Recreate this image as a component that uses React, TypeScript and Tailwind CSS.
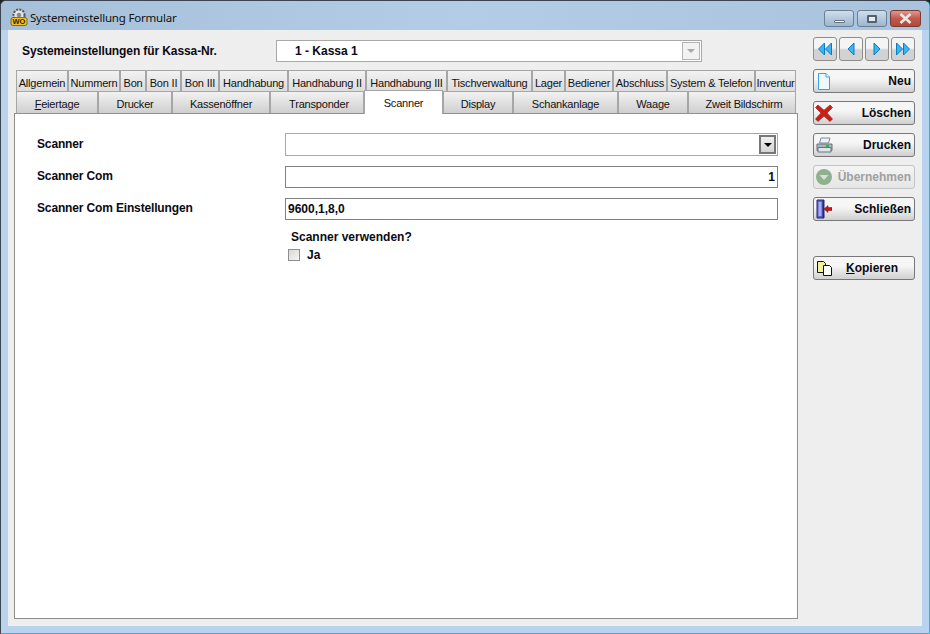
import { ReactNode } from "react"

const topTabs = [
  { label: "Allgemein", w: "w-[52px]" },
  { label: "Nummern", w: "w-[52px]" },
  { label: "Bon", w: "w-[26px]" },
  { label: "Bon II", w: "w-[35px]" },
  { label: "Bon III", w: "w-[38px]" },
  { label: "Handhabung", w: "w-[69px]" },
  { label: "Handhabung II", w: "w-[78px]" },
  { label: "Handhabung III", w: "w-[81px]" },
  { label: "Tischverwaltung", w: "w-[85px]" },
  { label: "Lager", w: "w-[33px]" },
  { label: "Bediener", w: "w-[48px]" },
  { label: "Abschluss", w: "w-[54px]" },
  { label: "System & Telefon", w: "w-[88px]" },
  { label: "Inventur", w: "w-[41px]" },
]

const bottomTabs = [
  { label: "Feiertage", w: "w-[82px]" },
  { label: "Drucker", w: "w-[74px]" },
  { label: "Kassenöffner", w: "w-[98px]" },
  { label: "Transponder", w: "w-[94px] pl-[4px]" },
  { label: "Scanner", w: "w-[79px]", active: true },
  { label: "Display", w: "w-[70px]" },
  { label: "Schankanlage", w: "w-[105px]" },
  { label: "Waage", w: "w-[70px]" },
  { label: "Zweit Bildschirm", w: "w-[108px] pl-[4px]" },
]

function DocIcon() {
  return (
    <svg width="14" height="19" viewBox="0 0 14 19">
      <path d="M1.500 1.500h7.500l3.500 3.500v12.500h-11z" fill="#eef8ff" stroke="#35a6e0" />
      <path d="M9 1.500v3.500h3.500" fill="#fff" stroke="#35a6e0" />
    </svg>
  )
}

function CrossIcon() {
  return (
    <svg width="18" height="18" viewBox="0 0 18 18">
      <path d="M3 1l6 5.200 6-5.200 2.500 2.500-5.500 5.500 5.500 6-2.500 2.500-6-5.500-6 5.500-2.500-2.500 5.500-6-5.500-5.500z" fill="#cc1f18" stroke="#8e1510" strokeWidth="0.6" />
    </svg>
  )
}

function PrinterIcon() {
  return (
    <svg width="17" height="16" viewBox="0 0 17 16">
      <path d="M5 1h9l-1.500 5h-9z" fill="#eef2f6" stroke="#7d8a96" />
      <path d="M1 7h15v6.500h-15z" fill="#a9b6c2" stroke="#66737f" />
      <path d="M2 10.500h13v4.500h-13z" fill="#dfe5ea" stroke="#66737f" />
      <rect x="10" y="8" width="3" height="2" fill="#1fc23c" />
    </svg>
  )
}

function ApplyIcon() {
  return (
    <svg width="18" height="18" viewBox="0 0 18 18">
      <circle cx="9" cy="9" r="8" fill="#8eb08f" />
      <path d="M4.500 7h9l-4.500 5z" fill="#d6e2d6" />
    </svg>
  )
}

function ExitIcon() {
  return (
    <svg width="16" height="20" viewBox="0 0 16 20">
      <path d="M1 1h7v18h-7z" fill="#5c63d8" stroke="#23276f" />
      <path d="M2.500 3h3v14h-3z" fill="#a4acf4" />
      <path d="M6.500 1h1.500v18h-1.500z" fill="#26296e" />
      <path d="M8 10l4-3.500v2h4v3h-4v2z" fill="#cc1414" stroke="#7d0d0d" strokeWidth="0.5" />
    </svg>
  )
}

function CopyIcon() {
  return (
    <svg width="17" height="17" viewBox="0 0 17 17">
      <path d="M1.500 1.500h6l2 2v9h-8z" fill="#f6ef9b" stroke="#111" />
      <path d="M7.500 5.500h6l2 2v8h-8z" fill="#fff" stroke="#111" />
    </svg>
  )
}

function AppIcon() {
  return (
    <svg width="18" height="18" viewBox="0 0 18 18">
      <circle cx="9" cy="7" r="5.500" fill="#e7e7e7" stroke="#555" strokeWidth="2" strokeDasharray="2 1.200" />
      <circle cx="9" cy="7" r="2.300" fill="#8b8b8b" />
      <rect x="1" y="9.500" width="16" height="8" rx="2" fill="#f3c21c" stroke="#5b4300" strokeWidth="0.7" />
      <text x="9" y="16.300" textAnchor="middle" fontSize="7.500" fontWeight="700" fontFamily="Liberation Sans, sans-serif" fill="#2d2000">WO</text>
    </svg>
  )
}

function NavButton({ d }: { d: string }) {
  return (
    <button className="flex h-[24px] w-[24px] items-center justify-center rounded-[3px] border border-[#8e8e8e] bg-gradient-to-b from-[#f4f4f4] from-45% to-[#d2d2d2] to-55%">
      <svg width="16" height="16" viewBox="0 0 16 16">
        <path d={d} fill="#3db5ee" stroke="#0a7cc0" strokeWidth="1" />
      </svg>
    </button>
  )
}

function ActionButton({
  icon,
  children,
  disabled,
  className,
}: {
  icon: ReactNode
  children: ReactNode
  disabled?: boolean
  className?: string
}) {
  return (
    <button
      className={`flex h-[24px] w-[102px] items-center justify-between rounded-[3px] border bg-gradient-to-b pr-[3px] text-[12px] font-bold ${
        disabled
          ? "border-[#c4c4c4] from-[#f4f4f4] to-[#e6e6e6] text-[#a0a0a0]"
          : "border-[#777] from-[#f6f6f6] from-40% to-[#d0d0d0] text-[#0a0a14]"
      } ${className ?? ""}`}
    >
      <span className="flex w-[20px] shrink-0 justify-center">{icon}</span>
      {children}
    </button>
  )
}

function WindowButton({ children, className }: { children: ReactNode; className: string }) {
  return (
    <div className={`flex h-[17px] items-center justify-center rounded-[3px] border border-[#6b7f95] ${className}`}>
      {children}
    </div>
  )
}

export default function App() {
  return (
    <div className="flex h-[634px] w-[930px] flex-col overflow-hidden bg-[#222] font-['Liberation_Sans',Arial,sans-serif]">
      <div className="flex h-full flex-col rounded-t-[6px] border border-[#3b4450] border-b-[#19c3d6] border-r-[#19c3d6] bg-[#b9d3ee]">
        {/* title bar */}
        <div className="flex h-[29px] shrink-0 items-center rounded-t-[5px] bg-gradient-to-r from-[#a6c0d9] via-[#b4cde6] to-[#a9c3dc] pl-[9px] pr-[8px]">
          <div className="mt-[2px] flex">
            <AppIcon />
          </div>
          <span className="ml-[2px] mt-[5px] font-['Noto_Sans',sans-serif] text-[11.5px] tracking-[-0.2px] text-[#111]">
            Systemeinstellung Formular
          </span>
          <div className="ml-auto mt-[6px] flex gap-[3px]">
            <WindowButton className="w-[30px] bg-gradient-to-b from-[#d0deec] to-[#9bb6d0]">
              <div className="mt-[5px] h-[3px] w-[11px] rounded-[1px] border border-[#66727e] bg-white" />
            </WindowButton>
            <WindowButton className="w-[30px] bg-gradient-to-b from-[#d0deec] to-[#9bb6d0]">
              <div className="h-[8px] w-[10px] rounded-[1px] border-2 border-[#55616d] bg-[#e4ecf4]" />
            </WindowButton>
            <WindowButton className="w-[31px] border-[#7a3a32] bg-gradient-to-b from-[#dc9a90] via-[#c0594c] to-[#b04a3a]">
              <svg width="13" height="11" viewBox="0 0 13 11">
                <path d="M1.500 1l10 9M11.500 1l-10 9" stroke="#eee6e2" strokeWidth="2.600" />
              </svg>
            </WindowButton>
          </div>
        </div>

        {/* client area */}
        <div className="mx-[7px] flex h-[596px] shrink-0 bg-[#eeeeee]">
          <div className="w-[790px] shrink-0 pl-[6px] pt-[10px]">
            <div className="flex h-[22px] items-center">
              <span className="ml-[8px] w-[254px] text-[12px] font-bold tracking-[-0.1px] text-[#0a0a14]">
                Systemeinstellungen für Kassa-Nr.
              </span>
              <div className="flex h-[22px] w-[426px] items-center justify-between border border-[#a8a8a8] bg-white pl-[18px] pr-[1px] text-[12px] font-bold text-[#0a0a14]">
                1 - Kassa 1
                <div className="flex h-[18px] w-[18px] items-center justify-center border border-[#b4b4b4] bg-[#f2f2f2]">
                  <div className="h-0 w-0 border-x-[4px] border-t-[4px] border-x-transparent border-t-[#a8a8a8]" />
                </div>
              </div>
            </div>

            {/* tab rows */}
            <div className="mt-[8px] flex h-[21px] overflow-hidden pl-[2px]">
              {topTabs.map((tab) => (
                <div
                  key={tab.label}
                  className={`flex h-[21px] shrink-0 items-center justify-center whitespace-nowrap border border-b-0 border-[#a6a6a6] bg-gradient-to-b from-[#f2f2f2] to-[#dcdcdc] pt-[5px] text-[11px] tracking-[-0.2px] text-[#111] ${tab.w}`}
                >
                  {tab.label}
                </div>
              ))}
            </div>
            <div className="relative z-10 flex h-[22px] pl-[2px]">
              {bottomTabs.map((tab) => (
                <div
                  key={tab.label}
                  className={`flex shrink-0 items-center justify-center whitespace-nowrap border border-[#a6a6a6] text-[11px] tracking-[-0.2px] text-[#111] ${tab.w} ${
                    tab.active
                      ? "-mt-[1px] h-[24px] border-b-0 bg-white pt-[2px]"
                      : "h-[22px] border-b-0 bg-gradient-to-b from-[#f2f2f2] to-[#cfcfcf] pt-[3px]"
                  }`}
                >
                  {tab.label === "Feiertage" ? (
                    <span>
                      <span className="underline">F</span>eiertage
                    </span>
                  ) : (
                    tab.label
                  )}
                </div>
              ))}
            </div>

            {/* scanner page */}
            <div className="h-[506px] w-[784px] border border-[#8f8f8f] bg-white pl-[22px] pt-[19px] text-[12px] font-bold text-[#0a0a14]">
              <div className="flex h-[23px] items-center">
                <span className="mb-[2px] w-[248px] tracking-[-0.15px]">Scanner</span>
                <div className="flex h-[23px] w-[493px] items-center justify-end border border-[#a8a8a8] bg-white pr-[1px]">
                  <div className="flex h-[19px] w-[17px] items-center justify-center border-2 border-[#777] bg-gradient-to-b from-[#f0f0f0] to-[#d4d4d4]">
                    <div className="h-0 w-0 border-x-[4px] border-t-[4px] border-x-transparent border-t-black" />
                  </div>
                </div>
              </div>
              <div className="mt-[10px] flex h-[22px] items-center">
                <span className="mb-[2px] w-[248px] tracking-[-0.15px]">Scanner Com</span>
                <div className="flex h-[22px] w-[493px] items-center justify-end border border-[#808080] pr-[2px]">1</div>
              </div>
              <div className="mt-[10px] flex h-[22px] items-center">
                <span className="mb-[2px] w-[248px] tracking-[-0.15px]">Scanner Com Einstellungen</span>
                <div className="flex h-[22px] w-[493px] items-center border border-[#808080] pl-[2px]">9600,1,8,0</div>
              </div>
              <div className="ml-[254px] mt-[8px]">Scanner verwenden?</div>
              <div className="ml-[251px] flex items-center gap-[7px]">
                <div className="h-[12px] w-[12px] border border-[#8e8e8e] bg-gradient-to-br from-[#d8d8d8] to-[#f6f6f6]" />
                Ja
              </div>
            </div>
          </div>

          {/* right column */}
          <div className="ml-[15px] pt-[7px]">
            <div className="flex gap-[2px]">
              <NavButton d="M7.500 2v12L1.500 8zM14.500 2v12L8.500 8z" />
              <NavButton d="M11 2v12L5 8z" />
              <NavButton d="M5 2v12l6-6z" />
              <NavButton d="M1.500 2v12L7.500 8zM8.500 2v12L14.500 8z" />
            </div>
            <div className="mt-[8px] flex flex-col gap-[8px]">
              <ActionButton icon={<DocIcon />}>Neu</ActionButton>
              <ActionButton icon={<CrossIcon />}>Löschen</ActionButton>
              <ActionButton icon={<PrinterIcon />}>Drucken</ActionButton>
              <ActionButton icon={<ApplyIcon />} disabled>
                Übernehmen
              </ActionButton>
              <ActionButton icon={<ExitIcon />}>Schließen</ActionButton>
            </div>
            <ActionButton icon={<CopyIcon />} className="mt-[35px]">
              <span className="mr-[13px]">
                <span className="underline">K</span>opieren
              </span>
            </ActionButton>
          </div>
        </div>
      </div>
    </div>
  )
}
